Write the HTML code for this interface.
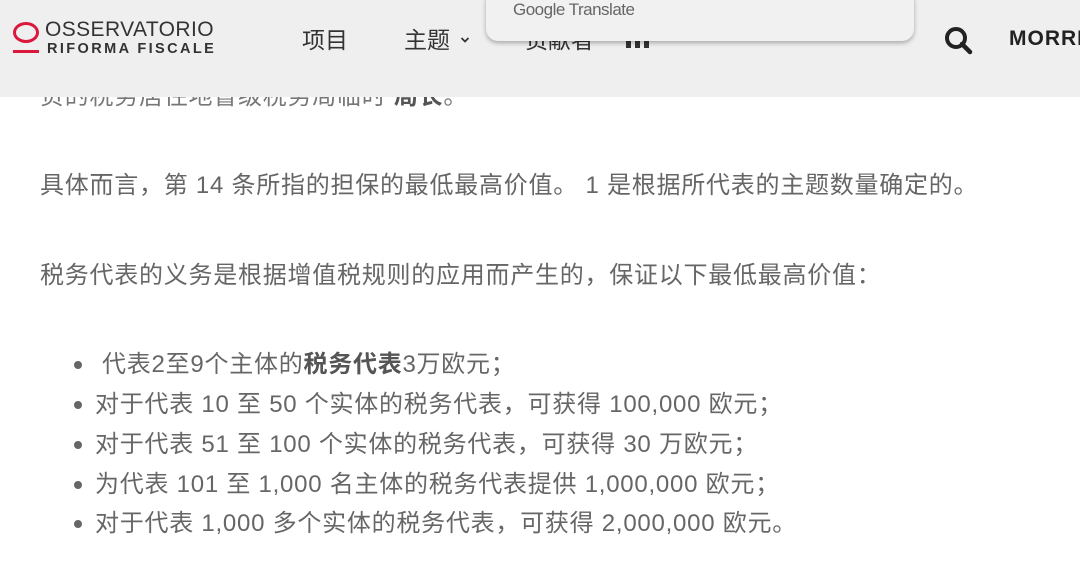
<!DOCTYPE html>
<html><head><meta charset="utf-8"><style>
body{margin:0;width:1080px;height:570px;overflow:hidden;background:#fff;position:relative;font-family:"Liberation Sans","Noto Sans CJK SC",sans-serif;color:#666}
.p{position:absolute;left:40px;font-size:24px;white-space:nowrap;line-height:30px;letter-spacing:0.75px}
.hdr{position:absolute;left:0;top:0;width:1080px;height:97px;background:#efefef}
.li{position:absolute;left:95px;font-size:24px;white-space:nowrap;line-height:30px;letter-spacing:0.75px}
.dot{position:absolute;left:74px;width:8px;height:8px;border-radius:50%;background:#666}
b{color:#555;font-weight:600}
</style></head><body>
<div class="p" style="top:82px;color:#777">负的税务居住地督级税务局临时 <b>局长</b>。</div>
<div class="p" style="top:171px">具体而言，第 14 条所指的担保的最低最高价值。 1 是根据所代表的主题数量确定的。</div>
<div class="p" style="top:261px">税务代表的义务是根据增值税规则的应用而产生的，保证以下最低最高价值：</div>
<div class="dot" style="top:361px"></div><div class="li" style="top:350px;left:102px">代表2至9个主体的<b>税务代表</b>3万欧元；</div>
<div class="dot" style="top:401px"></div><div class="li" style="top:390px">对于代表 10 至 50 个实体的税务代表，可获得 100,000 欧元；</div>
<div class="dot" style="top:441px"></div><div class="li" style="top:430px">对于代表 51 至 100 个实体的税务代表，可获得 30 万欧元；</div>
<div class="dot" style="top:481px"></div><div class="li" style="top:470px">为代表 101 至 1,000 名主体的税务代表提供 1,000,000 欧元；</div>
<div class="dot" style="top:520px"></div><div class="li" style="top:509px">对于代表 1,000 多个实体的税务代表，可获得 2,000,000 欧元。</div>
<div class="hdr">
 <div style="position:absolute;left:13px;top:22px;width:20px;height:15px;border:3px solid #d9183b;border-radius:50%"></div>
 <div style="position:absolute;left:13px;top:50px;width:26px;height:3px;background:#d9183b"></div>
 <div style="position:absolute;left:45px;top:18px;font-size:21px;letter-spacing:0.4px;color:#333">OSSERVATORIO</div>
 <div style="position:absolute;left:47px;top:41px;font-size:14.5px;font-weight:bold;letter-spacing:2.4px;color:#333">RIFORMA FISCALE</div>
 <div style="position:absolute;left:302px;top:21px;font-size:23px;color:#333">项目</div>
 <div style="position:absolute;left:404px;top:21px;font-size:23px;color:#333">主题</div>
 <svg style="position:absolute;left:460px;top:36px" width="10" height="8" viewBox="0 0 10 8"><path d="M1.5 2 L5 5.5 L8.5 2" fill="none" stroke="#333" stroke-width="1.8"/></svg>
 <div style="position:absolute;left:525px;top:21px;font-size:23px;color:#333">贡献者</div>
 <div style="position:absolute;left:626px;top:36px;width:5px;height:12px;background:#333"></div>
 <div style="position:absolute;left:635px;top:36px;width:5px;height:12px;background:#333"></div>
 <div style="position:absolute;left:644px;top:36px;width:5px;height:12px;background:#333"></div>
 <svg style="position:absolute;left:943px;top:25px" width="30" height="30" viewBox="0 0 30 30"><circle cx="13" cy="13" r="9" fill="none" stroke="#222" stroke-width="4"/><line x1="19" y1="19" x2="27" y2="27" stroke="#222" stroke-width="4.5" stroke-linecap="round"/></svg>
 <div style="position:absolute;left:1009px;top:27px;font-size:21px;font-weight:bold;letter-spacing:1px;color:#222">MORRI</div>
</div>
<div style="position:absolute;left:486px;top:-10px;width:428px;height:51px;background:#f1f1f1;border-radius:12px;box-shadow:0 2px 5px rgba(0,0,0,.3)">
 <div style="position:absolute;left:27px;top:10px;font-size:17px;color:#666;letter-spacing:-0.5px">Google Translate</div>
</div>
</body></html>
